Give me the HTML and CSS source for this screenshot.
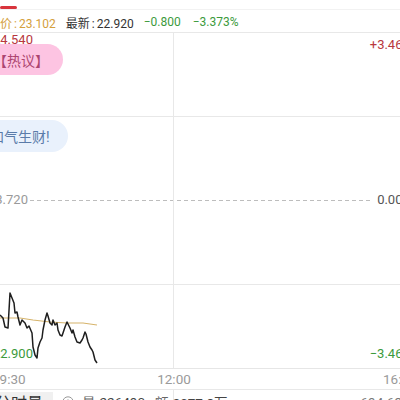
FILE: index.html
```html
<!DOCTYPE html>
<html lang="zh">
<head>
<meta charset="utf-8">
<link rel="stylesheet" href="styles.css">
</head>
<body>
<div class="screen">
  <div class="tabbar"><span class="tab-ind"></span></div>
  <div class="quote">
    <span class="q-avg">均价<span class="sep">:</span>23.102</span>
    <span class="q-last">最新<span class="sep">:</span>22.920</span>
    <span class="q-down">−0.800</span>
    <span class="q-down q-pct">−3.373%</span>
  </div>
  <div class="chart">
    <div class="row"></div>
    <div class="row"></div>
    <div class="row"></div>
    <div class="row"></div>
    <div class="mid-line"></div>
    <div class="vline"></div>
    <svg class="plot" width="120" height="336" viewBox="0 0 120 336">
      <polyline fill="none" stroke="#d6b46c" stroke-width="1.2" points="0,286 20,286 33,288 50,290 67,291 83,291 97,293"/>
      <polyline fill="none" stroke="#1e1e1e" stroke-width="1.5" stroke-linejoin="round" points="0,283 3,286 5,295 8,296 10,261 12,266 14,271 15,281 17,280 18,285 20,293 22,288 25,291 27,296 29,294 32,301 33,315 35,323 37,326 38,316 40,310 42,306 43,298 45,288 47,281 48,284 50,291 52,293 53,288 55,293 57,291 58,298 60,303 62,304 63,301 65,295 67,290 68,292 70,296 72,301 73,298 75,305 77,310 80,311 82,308 83,306 85,300 86,302 88,310 90,315 92,318 93,320 95,328 97,331"/>
    </svg>
    <div class="bubble bubble-pink">【热议】</div>
    <div class="bubble bubble-blue">和气生财!</div>
    <span class="lbl lbl-top-l">24.540</span>
    <span class="lbl lbl-top-r">+3.46%</span>
    <span class="lbl lbl-mid-l">23.720</span>
    <span class="lbl lbl-mid-r">0.00%</span>
    <span class="lbl lbl-bot-l">22.900</span>
    <span class="lbl lbl-bot-r">−3.46%</span>
  </div>
  <div class="times">
    <span class="t t-open">09:30</span>
    <span class="t t-mid">12:00</span>
    <span class="t t-close">16:00</span>
  </div>
  <div class="vol-row">
    <span class="vol-tab">分时量<span class="caret">▾</span></span>
    <svg class="vol-icon" width="12" height="12" viewBox="0 0 12 12"><circle cx="6" cy="6" r="5.2" fill="none" stroke="#9a9a9a" stroke-width="1"/><circle cx="6" cy="6" r="2" fill="none" stroke="#9a9a9a" stroke-width="1"/></svg>
    <span class="vol-k">量</span><span class="vol-v">226490</span>
    <span class="vol-k vol-k2">额</span><span class="vol-v">2077.8万</span>
    <span class="vol-max">694.63</span>
  </div>
</div>
</body>
</html>
```
FILE: styles.css
```css
html, body {
  margin: 0;
  padding: 0;
  background: #ffffff;
}
body {
  width: 400px;
  height: 400px;
  overflow: hidden;
  font-family: Roboto, "Noto Sans CJK SC", sans-serif;
  color: #333333;
}
.screen {
  margin-left: -12px;
  width: 426px;
}
.tabbar {
  height: 10px;
  box-sizing: border-box;
  padding-top: 6px;
  border-bottom: 1px solid #f2f2f2;
}
.tab-ind {
  display: block;
  width: 17px;
  height: 3px;
  border-radius: 2px;
  background: #d8343c;
  margin-left: 12px;
}
.quote {
  height: 22px;
  display: flex;
  align-items: center;
  gap: 10px;
  font-size: 12px;
  white-space: nowrap;
  padding-top: 2px;
  box-sizing: border-box;
}
.sep { margin: 0 2px; }
.q-avg { color: #d4a03c; }
.q-last { color: #333333; }
.q-down { color: #3c9a3c; }
.q-pct { margin-left: 2px; }

.chart {
  position: relative;
  border-bottom: 1px solid #e6e6e6;
}
.row {
  height: 83px;
  border-top: 1px solid #e8e8e8;
}
.row:nth-child(3) {
  border-top-color: transparent;
}
.mid-line {
  position: absolute;
  left: 42px;
  width: 342px;
  top: 168px;
  height: 1px;
  background: repeating-linear-gradient(to right, #bdbdbd 0 4px, transparent 4px 7px);
}
.vline {
  position: absolute;
  left: 185px;
  top: 0;
  bottom: 0;
  width: 1px;
  background: #e8e8e8;
}
.plot {
  position: absolute;
  left: 12px;
  top: 0;
}
.bubble {
  position: absolute;
  left: 0;
  box-sizing: border-box;
  display: flex;
  align-items: center;
  font-size: 14px;
  white-space: nowrap;
  border-radius: 0 16px 16px 0;
}
.bubble-pink {
  top: 12px;
  height: 31px;
  padding: 0 14px 0 5px;
  background: #fdc4e2;
  color: #ad4670;
}
.bubble-blue {
  top: 88px;
  height: 32px;
  padding: 0 18px 0 2px;
  background: #e9f1fc;
  color: #5a7ba9;
}
.lbl {
  position: absolute;
  font-size: 13px;
  line-height: 15px;
  white-space: nowrap;
}
.lbl-top-l { left: 5px; top: 0; color: #b8383e; }
.lbl-top-r { right: 2px; top: 5px; color: #b8383e; }
.lbl-mid-l { left: 0; top: 160px; color: #9a9a9a; }
.lbl-mid-r { right: 2px; top: 160px; color: #555555; }
.lbl-bot-l { left: 5px; top: 314px; color: #3c9a3c; }
.lbl-bot-r { right: 2px; top: 314px; color: #3c9a3c; }

.times {
  position: relative;
  height: 20px;
  border-bottom: 1px solid #e8e8e8;
  font-size: 13.5px;
  color: #9a9a9a;
}
.t {
  position: absolute;
  top: 0;
  line-height: 20px;
}
.t-open { left: 4px; }
.t-mid { left: 186px; transform: translateX(-50%); }
.t-close { left: 395px; }

.vol-row {
  position: relative;
  height: 22px;
  display: flex;
  align-items: center;
  font-size: 13.5px;
  white-space: nowrap;
  padding-top: 2px;
  box-sizing: border-box;
}
.vol-row::before {
  content: "";
  position: absolute;
  left: 185px;
  top: 0;
  bottom: 0;
  width: 1px;
  background: #e8e8e8;
}
.vol-tab {
  position: relative;
  display: flex;
  align-items: center;
  height: 20px;
  padding: 0 4px 0 7px;
  background: #f0f0f0;
  font-size: 16px;
  color: #333333;
}
.caret {
  font-size: 9px;
  color: #888888;
  margin-left: 1px;
}
.vol-icon {
  position: relative;
  margin-left: 9px;
}
.vol-k {
  position: relative;
  color: #666666;
  margin-left: 8px;
}
.vol-k2 { margin-left: 10px; }
.vol-v {
  position: relative;
  color: #444444;
  margin-left: 4px;
}
.vol-max {
  position: relative;
  margin-left: auto;
  margin-right: 12px;
  color: #777777;
}
```
